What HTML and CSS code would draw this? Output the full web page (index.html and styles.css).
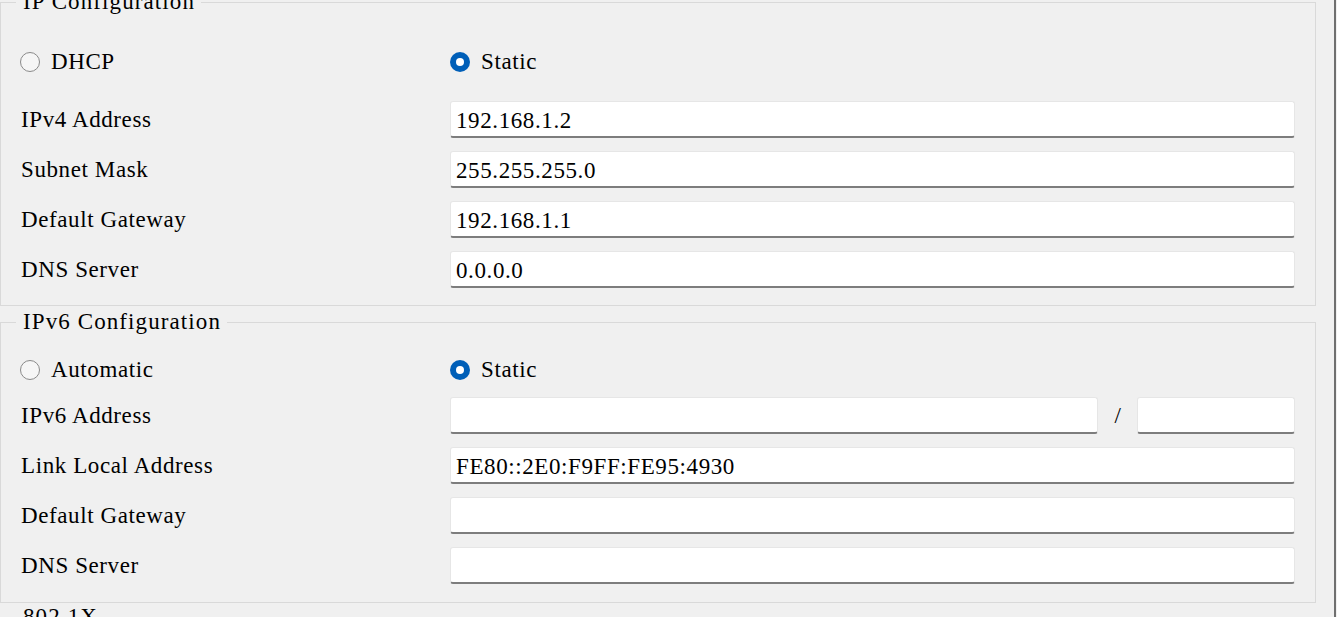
FILE: index.html
```html
<!DOCTYPE html>
<html>
<head>
<meta charset="utf-8">
<link rel="stylesheet" href="styles.css">
</head>
<body>
<div class="pane">
  <fieldset class="group group-ipv4">
    <legend>IP Configuration</legend>
    <div class="row radio-row">
      <label class="opt"><span class="radio"></span><span>DHCP</span></label>
      <label class="opt"><span class="radio checked"></span><span>Static</span></label>
    </div>
    <div class="rows rows-ipv4">
      <div class="row"><span class="lbl">IPv4 Address</span><input class="field" value="192.168.1.2"></div>
      <div class="row"><span class="lbl">Subnet Mask</span><input class="field" value="255.255.255.0"></div>
      <div class="row"><span class="lbl">Default Gateway</span><input class="field" value="192.168.1.1"></div>
      <div class="row"><span class="lbl">DNS Server</span><input class="field" value="0.0.0.0"></div>
    </div>
  </fieldset>

  <fieldset class="group group-ipv6">
    <legend>IPv6 Configuration</legend>
    <div class="row radio-row">
      <label class="opt"><span class="radio"></span><span>Automatic</span></label>
      <label class="opt"><span class="radio checked"></span><span>Static</span></label>
    </div>
    <div class="rows rows-ipv6">
      <div class="row"><span class="lbl">IPv6 Address</span>
        <div class="split">
          <input class="field" value="">
          <span class="slash">/</span>
          <input class="field prefix" value="">
        </div>
      </div>
      <div class="row"><span class="lbl">Link Local Address</span><input class="field" value="FE80::2E0:F9FF:FE95:4930"></div>
      <div class="row"><span class="lbl">Default Gateway</span><input class="field" value=""></div>
      <div class="row"><span class="lbl">DNS Server</span><input class="field" value=""></div>
    </div>
  </fieldset>

  <fieldset class="group group-8021x">
    <legend>802.1X</legend>
    <div class="spacer"></div>
  </fieldset>
</div>
</body>
</html>
```

FILE: styles.css
```css
html, body {
  margin: 0;
  padding: 0;
  background: #f0f0f0;
  overflow: hidden;
}

body {
  font-family: "Liberation Serif", "Noto Sans CJK SC", serif;
  font-size: 23px;
  letter-spacing: 0.6px;
  color: #000;
}

.pane {
  width: 1334px;
  height: 617px;
  border-right: 2px solid #6f6f6f;
  box-sizing: content-box;
  overflow: hidden;
}

.group {
  width: 1316px;
  box-sizing: border-box;
  margin: 0;
  border: 1px solid #d9d9d9;
  padding: 0 20px 0 19px;
  min-width: 0;
}

.group legend {
  margin-left: -4px;
  padding: 0 6px 0 7px;
  line-height: 26px;
  height: 26px;
  letter-spacing: 1.1px;
}

.group-ipv4 {
  margin-top: -11px;
  padding-top: 32px;
  padding-bottom: 17px;
}

.group-ipv6 {
  margin-top: 3px;
  padding-top: 20px;
  padding-bottom: 18px;
}

.group-8021x {
  margin-top: 1px;
}

.spacer {
  height: 40px;
}

.row {
  display: grid;
  grid-template-columns: 430px 1fr;
  align-items: center;
  height: 37px;
}

.radio-row {
  height: 30px;
}

.rows {
  display: flex;
  flex-direction: column;
  gap: 13px;
}

.rows-ipv4 {
  margin-top: 24px;
}

.rows-ipv6 {
  margin-top: 12px;
}

.opt {
  display: flex;
  align-items: center;
  gap: 11px;
}

.radio {
  width: 20px;
  height: 20px;
  box-sizing: border-box;
  border-radius: 50%;
  border: 1px solid #8a8a8a;
  background: #f6f6f6;
  flex: none;
  position: relative;
}

.radio.checked {
  border: none;
  background: #005fb8;
}

.radio.checked::after {
  content: "";
  position: absolute;
  left: 6px;
  top: 6px;
  width: 8px;
  height: 8px;
  border-radius: 50%;
  background: #fff;
}

.lbl {
  padding-left: 1px;
  white-space: nowrap;
}

.field {
  font: inherit;
  letter-spacing: inherit;
  color: #000;
  height: 37px;
  box-sizing: border-box;
  margin: 0;
  width: 100%;
  background: #fff;
  border: 1px solid #e6e6e6;
  border-bottom: 2px solid #7d7d7d;
  border-radius: 3px;
  padding: 3px 0 0 5px;
  outline: none;
}

.split {
  display: flex;
  align-items: center;
}

.split .field {
  flex: 1;
}

.split .prefix {
  flex: none;
  width: 158px;
}

.slash {
  width: 39px;
  text-align: center;
  padding-left: 1px;
  box-sizing: border-box;
}
```
